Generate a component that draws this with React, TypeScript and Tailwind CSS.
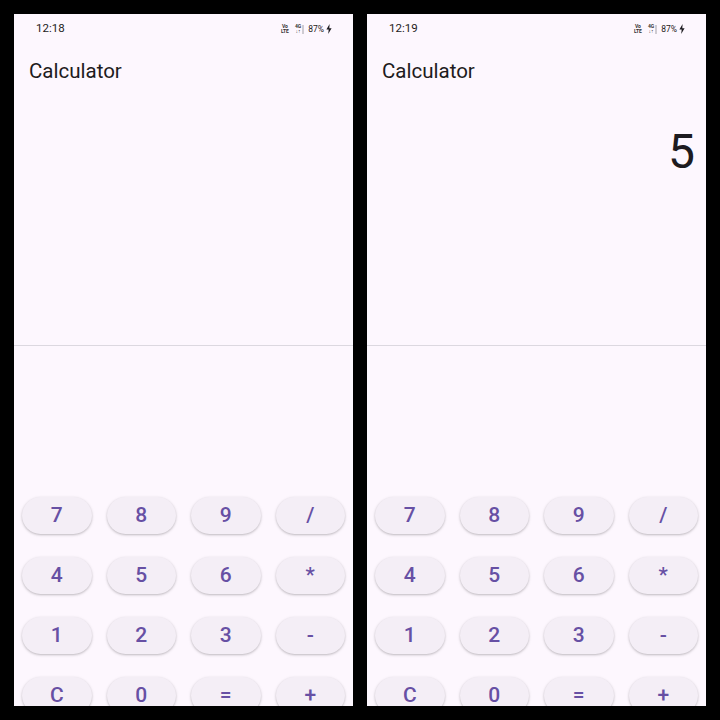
import React from "react";

const keys = ["7", "8", "9", "/", "4", "5", "6", "*", "1", "2", "3", "-", "C", "0", "=", "+"];

function StatusBar({ time }: { time: string }) {
  return (
    <div className="flex h-[29px] shrink-0 items-center justify-between pl-[22px] pr-[21px] pt-[1px] text-[#1d1b20]">
      <span className="text-[11.5px] leading-none">{time}</span>
      <div className="flex items-center">
        <div className="flex flex-col items-center leading-none text-[5px] font-bold text-[#333]">
          <span>Vo</span>
          <span>LTE</span>
        </div>
        <div className="ml-[6px] flex items-end gap-[1px]">
          <div className="flex flex-col items-center leading-none text-[5px] font-bold text-[#333]">
            <span>4G</span>
            <span>↓↑</span>
          </div>
          <div className="h-[9px] w-[2px] bg-[#cfcbd2]" />
        </div>
        <span className="ml-[4px] text-[8.5px] leading-none">87%</span>
        <svg className="ml-[2px]" width="6" height="10" viewBox="0 0 6 10">
          <path d="M3.6 0 L0.4 5.6 H2.7 L2.2 10 L5.6 4.2 H3.3 Z" fill="#1d1b20" />
        </svg>
      </div>
    </div>
  );
}

function Phone({ time, value }: { time: string; value: string }) {
  return (
    <div className="flex h-[692px] w-[339px] flex-col overflow-hidden bg-[#fdf7fe] font-['Roboto',sans-serif]">
      <StatusBar time={time} />
      <div className="flex h-[55px] shrink-0 items-center pl-[15px] pt-[1px]">
        <h1 className="text-[20.5px] leading-none text-[#1d1b20]">Calculator</h1>
      </div>
      <div className="flex h-[247px] shrink-0 flex-col items-end pr-[11px] pt-[30px]">
        <span className="text-[48px] leading-[48px] text-[#1d1b20]">{value}</span>
      </div>
      <div className="h-[1px] shrink-0 bg-[#dcd8e0]" />
      <div className="mt-[151px] grid shrink-0 grid-cols-4 gap-x-[15px] gap-y-[23px] px-[8px]">
        {keys.map((k) => (
          <button
            key={k}
            className="flex h-[37px] items-center justify-center rounded-full bg-[#f4eef6] text-[21px] font-medium leading-none text-[#6750a4] shadow-[0_1px_2px_rgba(0,0,0,0.18),0_1px_3px_1px_rgba(0,0,0,0.06)]"
          >
            {k}
          </button>
        ))}
      </div>
    </div>
  );
}

export default function App() {
  return (
    <div className="flex h-[720px] w-[720px] gap-[14px] bg-black pl-[14px] pt-[14px]">
      <Phone time="12:18" value="" />
      <Phone time="12:19" value="5" />
    </div>
  );
}
